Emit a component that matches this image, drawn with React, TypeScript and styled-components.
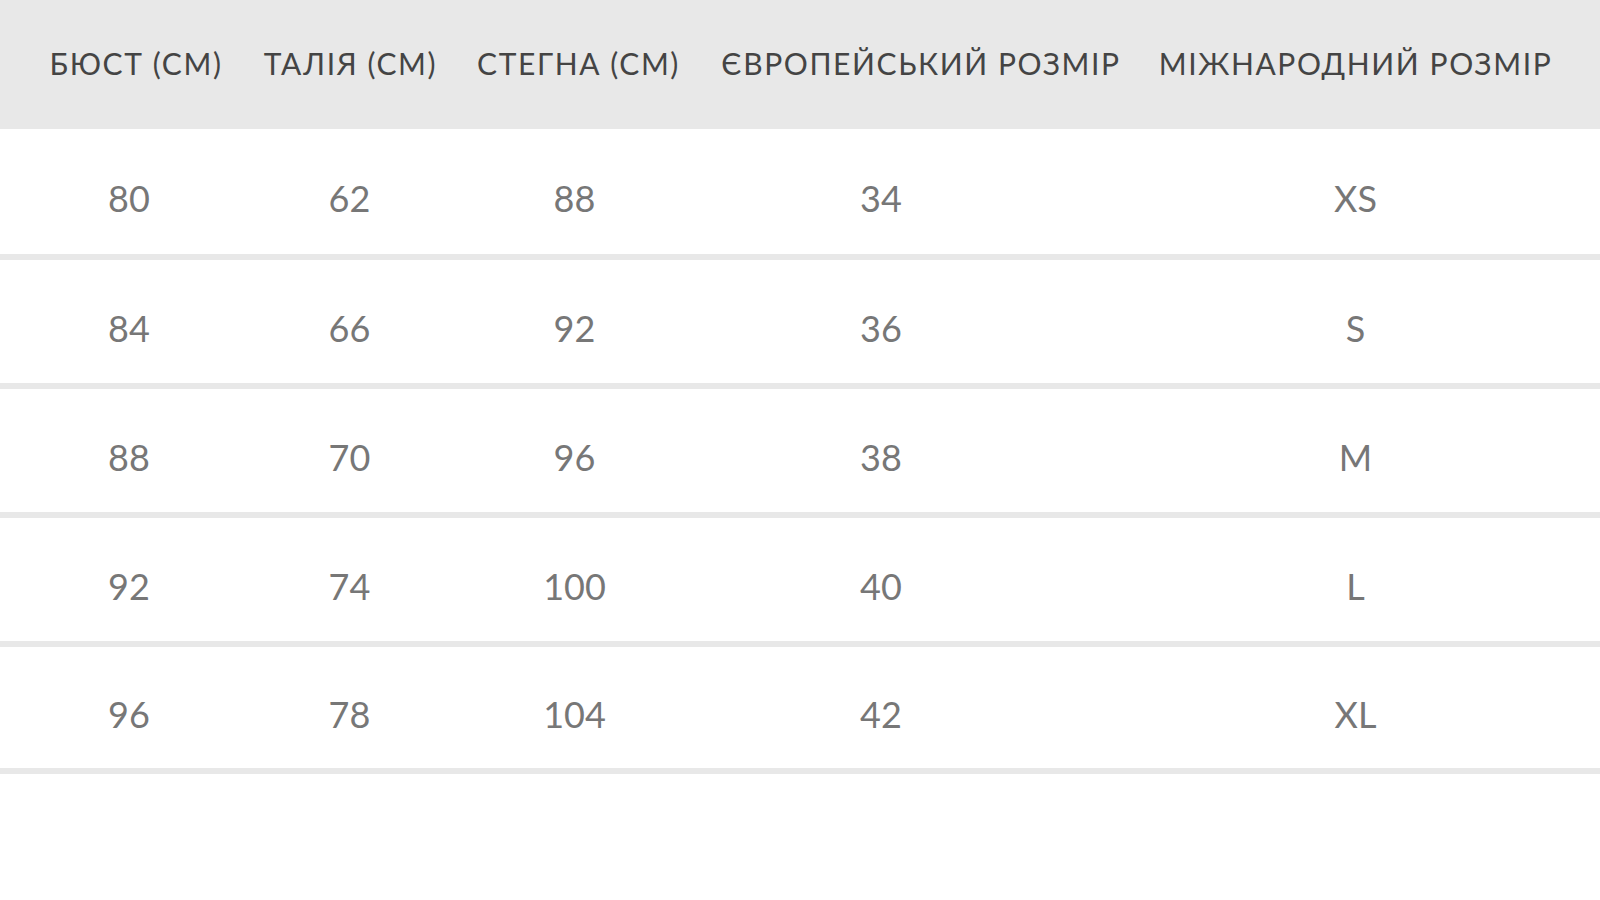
import React from "react";
import styled, { createGlobalStyle } from "styled-components";

const Global = createGlobalStyle`
  html, body { margin: 0; padding: 0; background: #ffffff; }
  body { font-family: Lato, "Open Sans", sans-serif; }
`;

const Page = styled.div`
  width: 1600px;
  height: 900px;
  background: #ffffff;
  overflow: hidden;
`;

const cols = "216px 213px 243px 442px 427px";

const HeaderRow = styled.div`
  display: grid;
  grid-template-columns: ${cols};
  padding: 0 31px 4px 28px;
  height: 129px;
  box-sizing: border-box;
  align-items: center;
  background: #e8e8e8;
`;

const HeadCell = styled.div`
  text-align: center;
  font-family: Lato, "Open Sans", sans-serif;
  font-size: 30px;
  letter-spacing: 1.6px;
  color: #444444;
  white-space: nowrap;
`;

const BodyRow = styled.div<{ $h: number }>`
  display: grid;
  grid-template-columns: ${cols};
  padding: 12px 31px 0 28px;
  height: ${(p) => p.$h}px;
  align-items: center;
  border-bottom: 6px solid #e8e8e8;
`;

const BodyCell = styled.div<{ $shift: number }>`
  text-align: center;
  font-family: Lato, "Open Sans", sans-serif;
  font-size: 36px;
  color: #777777;
  padding-right: ${(p) => p.$shift * 2}px;
`;

const headers = [
  "БЮСТ (СМ)",
  "ТАЛІЯ (СМ)",
  "СТЕГНА (СМ)",
  "ЄВРОПЕЙСЬКИЙ РОЗМІР",
  "МІЖНАРОДНИЙ РОЗМІР",
];

const shifts = [7, 1, 4, 40, 0];

const rows = [
  { h: 113, v: ["80", "62", "88", "34", "XS"] },
  { h: 111, v: ["84", "66", "92", "36", "S"] },
  { h: 111, v: ["88", "70", "96", "38", "M"] },
  { h: 111, v: ["92", "74", "100", "40", "L"] },
  { h: 109, v: ["96", "78", "104", "42", "XL"] },
];

export default function App() {
  return (
    <Page>
      <Global />
      <HeaderRow>
        {headers.map((h) => (
          <HeadCell key={h}>{h}</HeadCell>
        ))}
      </HeaderRow>
      {rows.map((r, i) => (
        <BodyRow key={i} $h={r.h}>
          {r.v.map((v, j) => (
            <BodyCell key={j} $shift={shifts[j]}>
              {v}
            </BodyCell>
          ))}
        </BodyRow>
      ))}
    </Page>
  );
}
